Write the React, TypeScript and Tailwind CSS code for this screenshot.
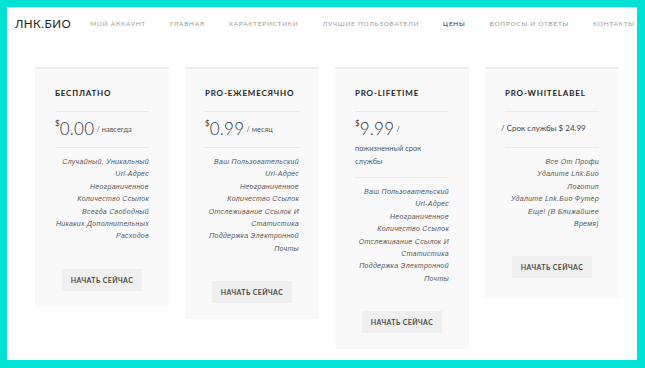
const nav = [
  "Мой аккаунт",
  "Главная",
  "Характеристики",
  "Лучшие пользователи",
  "Цены",
  "Вопросы и ответы",
  "Контакты",
];

type Plan = {
  title: string;
  amount?: string;
  period?: string;
  note?: string[];
  flat?: string;
  features: string[];
};

const plans: Plan[] = [
  {
    title: "Бесплатно",
    amount: "0.00",
    period: "/ навсегда",
    features: [
      "Случайный, Уникальный",
      "Url-Адрес",
      "Неограниченное",
      "Количество Ссылок",
      "Всегда Свободный",
      "Никаких Дополнительных",
      "Расходов",
    ],
  },
  {
    title: "Pro-ежемесячно",
    amount: "0.99",
    period: "/ месяц",
    features: [
      "Ваш Пользовательский",
      "Url-Адрес",
      "Неограниченное",
      "Количество Ссылок",
      "Отслеживание Ссылок И",
      "Статистика",
      "Поддержка Электронной",
      "Почты",
    ],
  },
  {
    title: "Pro-lifetime",
    amount: "9.99",
    period: "/",
    note: ["пожизненный срок", "службы"],
    features: [
      "Ваш Пользовательский",
      "Url-Адрес",
      "Неограниченное",
      "Количество Ссылок",
      "Отслеживание Ссылок И",
      "Статистика",
      "Поддержка Электронной",
      "Почты",
    ],
  },
  {
    title: "Pro-whitelabel",
    flat: "/ Срок службы $ 24.99",
    features: [
      "Все От Профи",
      "Удалите Lnk.Био",
      "Логотип",
      "Удалите Lnk.Био Футер",
      "Еще! (В Ближайшее",
      "Время)",
    ],
  },
];

function PlanCard({ plan }: { plan: Plan }) {
  // the whitelabel card sits a little taller under its button
  const bottom = plan.flat ? "pb-[20px]" : "pb-[16px]";
  return (
    <div className={`w-[134px] shrink-0 border-t-2 border-[#ececef] bg-[#f9f9f9] px-[20px] pt-[19px] ${bottom}`}>
      <h3 className="text-[8px] leading-[10px] font-bold tracking-[0.8px] text-[#222] uppercase">
        {plan.title}
      </h3>
      <div className="mt-[13px] h-px bg-[#e6ebf1]" />
      {plan.flat ? (
        <div className="-ml-[4px] mt-[6px] mb-[9px] h-[20px] pt-[5px] text-[8px] leading-[10px] whitespace-nowrap text-[#444]">
          {plan.flat}
        </div>
      ) : (
        <div className="mt-[6px] mb-[9px]">
          <div className="flex h-[20px] items-center text-[#333]">
            <span className="self-start pt-[1px] text-[8px] leading-none">$</span>
            <span className="text-[17px] leading-none font-light tracking-[0.3px]">{plan.amount}</span>
            <span className="ml-[2px] pt-[4px] text-[7.5px] leading-none text-[#555]">{plan.period}</span>
          </div>
          {plan.note && (
            <div className="mt-[4px] text-[7.5px] leading-[13px] text-[#555]">
              {plan.note.map((n) => (
                <div key={n}>{n}</div>
              ))}
            </div>
          )}
        </div>
      )}
      <div className="h-px bg-[#e6ebf1]" />
      <ul className="pt-[8px] text-right font-['Liberation_Sans',Arial,sans-serif] text-[7px] leading-[12.4px] tracking-[0.3px] text-[#555] italic">
        {plan.features.map((f, i) => (
          <li key={i} className="whitespace-nowrap">
            {f}
          </li>
        ))}
      </ul>
      <div className="mt-[26px] flex justify-center">
        <button className="h-[22px] w-[80px] bg-[#efefef] text-[7px] font-bold tracking-[0.4px] text-[#4a4a4a] uppercase">
          Начать сейчас
        </button>
      </div>
    </div>
  );
}

export default function App() {
  return (
    <div className="h-[368px] w-[645px] bg-[#00e2d6] pt-[7px] pr-[8px] pb-[8px] pl-[7px] font-['Lato','Open_Sans',sans-serif]">
      <div className="h-full w-full overflow-hidden bg-white">
        <header className="flex h-[34px] items-center pl-[8px]">
          <span className="text-[11.5px] tracking-[0.5px] whitespace-nowrap text-[#222]">ЛНК.БИО</span>
          <nav className="ml-[19px] flex shrink-0 gap-[24px]">
            {nav.map((item) => (
              <a
                key={item}
                className={
                  item === "Цены"
                    ? "text-[6.5px] tracking-[0.7px] whitespace-nowrap text-[#333] uppercase"
                    : "text-[6.5px] tracking-[0.7px] whitespace-nowrap text-[#999] uppercase"
                }
              >
                {item}
              </a>
            ))}
          </nav>
        </header>
        <main className="mt-[26px] flex items-start gap-[16px] pl-[28px]">
          {plans.map((p) => (
            <PlanCard key={p.title} plan={p} />
          ))}
        </main>
      </div>
    </div>
  );
}
